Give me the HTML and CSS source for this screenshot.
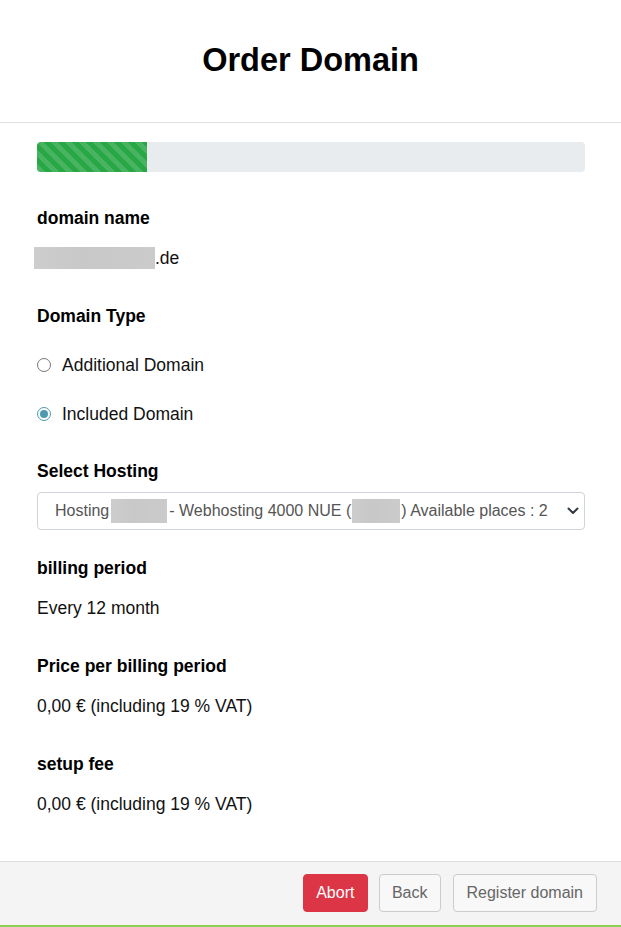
FILE: index.html
```html
<!DOCTYPE html>
<html>
<head>
<meta charset="utf-8">
<link rel="stylesheet" href="styles.css">
</head>
<body>
<div class="modal">
  <header class="head"><h1 class="title">Order Domain</h1></header>
  <main class="body">
    <div class="progress"><div class="progress-bar" style="width:20%"></div></div>

    <div class="label first">domain name</div>
    <div class="value"><span class="blur blur-domain"></span>.de</div>

    <div class="label">Domain Type</div>
    <div class="radios">
      <label class="radio"><span class="dot"></span>Additional Domain</label>
      <label class="radio"><span class="dot checked"></span>Included Domain</label>
    </div>

    <div class="label">Select Hosting</div>
    <div class="select">
      <span class="select-text">Hosting<span class="blur blur-a"></span>- Webhosting 4000 NUE (<span class="blur blur-b"></span>) Available places : 2</span>
      <svg class="chev" width="12" height="8" viewBox="0 0 12 8"><path d="M1.5 1.5 L6 6 L10.5 1.5" fill="none" stroke="#343a40" stroke-width="2" stroke-linecap="round" stroke-linejoin="round"/></svg>
    </div>

    <div class="label">billing period</div>
    <div class="value">Every 12 month</div>

    <div class="label">Price per billing period</div>
    <div class="value">0,00 € (including 19 % VAT)</div>

    <div class="label">setup fee</div>
    <div class="value">0,00 € (including 19 % VAT)</div>
  </main>
  <footer class="foot">
    <button class="btn btn-danger">Abort</button>
    <button class="btn btn-light">Back</button>
    <button class="btn btn-light btn-wide">Register domain</button>
  </footer>
</div>
</body>
</html>
```
FILE: styles.css
```css
* { box-sizing: border-box; }
html, body { margin: 0; padding: 0; }
body {
  font-family: "Liberation Sans", Arial, sans-serif;
  font-size: 17.5px;
  color: #111;
  background: #fff;
  width: 621px;
  height: 927px;
  overflow: hidden;
}
.modal { display: flex; flex-direction: column; height: 927px; }
.head {
  height: 123px;
  border-bottom: 1px solid #dee2e6;
  display: flex;
  align-items: center;
  justify-content: center;
}
.title {
  margin: 0;
  font-size: 32.5px;
  font-weight: bold;
  color: #000;
  line-height: 38px;
  padding-bottom: 2px;
}
.body { flex: 1; padding: 19px 36px 0 37px; }
.progress {
  height: 30px;
  background: #e9ecef;
  border-radius: 4px;
  overflow: hidden;
}
.progress-bar {
  height: 100%;
  background-color: #28a745;
  background-image: linear-gradient(45deg, rgba(255,255,255,.15) 25%, transparent 25%, transparent 50%, rgba(255,255,255,.15) 50%, rgba(255,255,255,.15) 75%, transparent 75%, transparent);
  background-size: 14px 14px;
}
.label {
  font-weight: bold;
  color: #000;
  line-height: 24px;
  margin-top: 33px;
  margin-bottom: 16px;
}
.label.first { margin-top: 34px; }
.value { line-height: 25px; color: #111; }
.blur {
  display: inline-block;
  background: linear-gradient(90deg, #cdcdcd, #c8c8c8 40%, #cbcbcb);
  vertical-align: middle;
}
.blur-domain { width: 121px; height: 22px; margin-left: -3px; margin-top: -3px; }
.radios { display: flex; flex-direction: column; gap: 25px; margin-top: 25px; margin-bottom: 5px; }
.radio { display: flex; align-items: center; line-height: 24px; color: #111; }
.dot {
  width: 14px; height: 14px;
  border: 1px solid #767676;
  border-radius: 50%;
  margin-right: 11px;
  background: #fff;
  position: relative;
}
.dot.checked { border-color: #4d9aae; }
.dot.checked::after {
  content: "";
  position: absolute;
  left: 2px; top: 2px;
  width: 8px; height: 8px;
  border-radius: 50%;
  background: #4d9aae;
}
.label + .select { margin-top: -7px; }
.select {
  height: 38px;
  border: 1px solid #ced4da;
  border-radius: 4px;
  display: flex;
  align-items: center;
  justify-content: space-between;
  padding: 0 5px 0 17px;
  color: #555;
  font-size: 16px;
  margin-bottom: -7px;
}
.select-text { display: flex; align-items: center; white-space: nowrap; }
.blur-a { width: 56px; height: 24px; margin: 0 2px 0 2px; }
.blur-b { width: 48px; height: 24px; margin: 0 1px; }
.foot {
  height: 66px;
  background: #f4f4f4;
  border-top: 1px solid #dcdcdc;
  border-bottom: 2px solid #8fd14f;
  display: flex;
  justify-content: flex-end;
  align-items: flex-start;
  gap: 11px;
  padding: 12px 24px 0 0;
}
.btn {
  font-family: "Liberation Sans", Arial, sans-serif;
  font-size: 16px;
  height: 38px;
  border-radius: 4px;
  padding: 0 12px;
  line-height: 36px;
  cursor: pointer;
}
.btn-danger { background: #dc3545; color: #fff; border: 1px solid #dc3545; padding: 0 12.5px; }
.btn-light { background: #f8f8f8; color: #666; border: 1px solid #ccc; }
.btn-wide { padding: 0 13px; margin-left: 1px; }
```
